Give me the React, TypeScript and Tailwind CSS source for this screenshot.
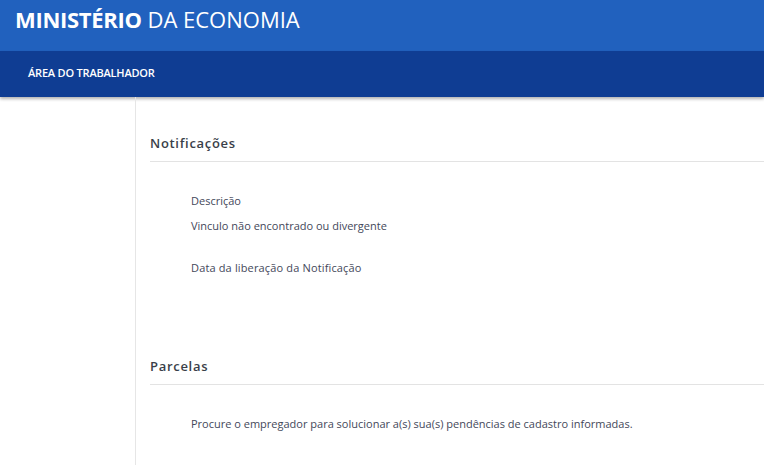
export default function App() {
  return (
    <div className="h-[465px] w-[764px] overflow-hidden bg-white font-['Open_Sans',sans-serif]">
      {/* header */}
      <div className="h-[51px] bg-[#2161be] pl-[15px] pt-[4px] text-[22px] leading-[30px] text-white">
        <span className="font-bold tracking-[-0.3px]">MINISTÉRIO</span> DA ECONOMIA
      </div>
      <div className="h-[46px] bg-[#0f3d93] pl-[28px] pt-[15px] text-[11px] font-semibold leading-[14px] tracking-[-0.2px] text-white shadow-[0_2px_3px_rgba(0,0,0,0.3)]">
        ÁREA DO TRABALHADOR
      </div>

      <div className="flex h-[368px]">
        <div className="w-[136px] shrink-0 border-r border-[#e6e6e6]" />
        <div className="flex-1 pl-[14px]">
          {/* notificações */}
          <div className="mt-[37px] border-b border-[#e3e3e3] pb-[9px] text-[13px] font-semibold leading-[18px] tracking-[0.7px] text-[#3a3f4a]">
            Notificações
          </div>
          <div className="pl-[41px] text-[11px] leading-[15px] text-[#44485a]">
            <div className="mt-[31px]">Descrição</div>
            <div className="mt-[10px]">Vinculo não encontrado ou divergente</div>
            <div className="mt-[27px] tracking-[0.15px]">Data da liberação da Notificação</div>
          </div>

          {/* parcelas */}
          <div className="mt-[82px] border-b border-[#e3e3e3] pb-[9px] text-[13px] font-semibold leading-[18px] tracking-[0.7px] text-[#3a3f4a]">
            Parcelas
          </div>
          <div className="mt-[31px] pl-[41px] text-[11px] leading-[15px] text-[#44485a]">
            Procure o empregador para solucionar a(s) sua(s) pendências de cadastro informadas.
          </div>
        </div>
      </div>
    </div>
  );
}
